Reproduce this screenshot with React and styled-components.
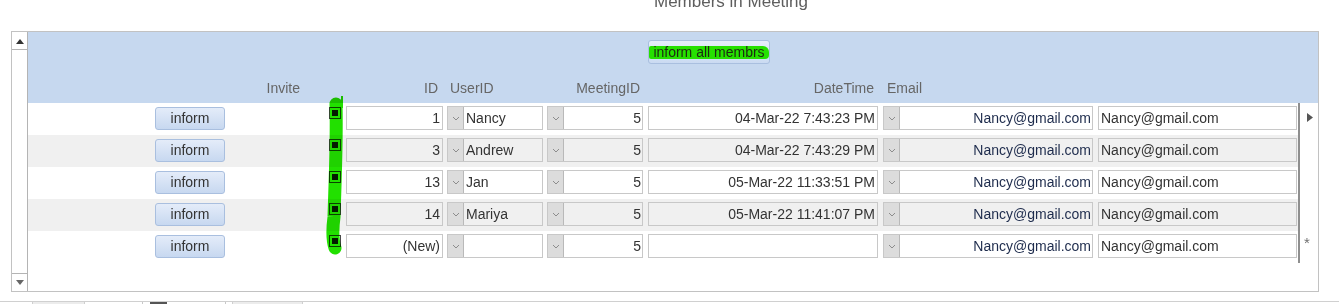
import styled, { createGlobalStyle } from "styled-components"

const GlobalStyle = createGlobalStyle`
    html, body {
        margin: 0;
        padding: 0;
        background: #ffffff;
    }

    body {
        font-family: "Liberation Sans", Arial, sans-serif;
    }
`

const COLS = "127px 70px 104px 17px 101px 100px 101px 235px 215px 200px"

const members = [
    { id: "1", user: "Nancy", meeting: "5", date: "04-Mar-22 7:43:23 PM" },
    { id: "3", user: "Andrew", meeting: "5", date: "04-Mar-22 7:43:29 PM" },
    { id: "13", user: "Jan", meeting: "5", date: "05-Mar-22 11:33:51 PM" },
    { id: "14", user: "Mariya", meeting: "5", date: "05-Mar-22 11:41:07 PM" },
    { id: "(New)", user: "", meeting: "5", date: "", isNew: true },
]

function Chevron() {
    return (
        <svg width="8" height="5" viewBox="0 0 8 5">
            <path d="M1 1 L4 4 L7 1" fill="none" stroke="#8c8c8c" strokeWidth="1" />
        </svg>
    )
}

function ComboBox({ width, align, navy, children }) {
    return (
        <Combo $width={width}>
            <ComboButton><Chevron /></ComboButton>
            <ComboText $align={align} $navy={navy}>{children}</ComboText>
        </Combo>
    )
}

export default function App() {
    return (
        <Page>
            <GlobalStyle />
            <Title>
                <span>Members in Meeting</span>
            </Title>

            <Panel>
                <ScrollBar>
                    <ScrollButton $down={false}>
                        <svg width="8" height="5" viewBox="0 0 8 5"><path d="M0 5 L4 0 L8 5 Z" fill="#333" /></svg>
                    </ScrollButton>
                    <ScrollButton $down>
                        <svg width="8" height="5" viewBox="0 0 8 5"><path d="M0 0 L4 5 L8 0 Z" fill="#666" /></svg>
                    </ScrollButton>
                </ScrollBar>

                <Sheet>
                    <Header>
                        <AllButton>
                            <Marked>inform all membrs</Marked>
                        </AllButton>

                        <Label $col="1 / 4" $align="right" $pad="0 29px 0 0">Invite</Label>
                        <Label $col="5" $align="right" $pad="0 9px 0 0">ID</Label>
                        <Label $col="6" $align="left" $pad="0 0 0 3px">UserID</Label>
                        <Label $col="7" $align="right" $pad="0 8px 0 0">MeetingID</Label>
                        <Label $col="8" $align="right" $pad="0 9px 0 0">DateTime</Label>
                        <Label $col="9" $align="left" $pad="0 0 0 4px">Email</Label>
                    </Header>

                    <Body>
                        <Records>
                            {members.map((m, i) => (
                                <Row key={i} $striped={i % 2 === 1}>
                                    <InformButton>inform</InformButton>
                                    <Check><span /></Check>
                                    <Field $width={97} $align="right">{m.id}</Field>
                                    <ComboBox width={96} align="left">{m.user}</ComboBox>
                                    <ComboBox width={96} align="right">{m.meeting}</ComboBox>
                                    <Field $width={230} $align="right">{m.date}</Field>
                                    <ComboBox width={210} align="right" navy>Nancy@gmail.com</ComboBox>
                                    <Field $width={199} $align="left">Nancy@gmail.com</Field>
                                </Row>
                            ))}
                        </Records>

                        <Divider />

                        <Selectors>
                            {members.map((m, i) => (
                                <Selector key={i}>
                                    {i === 0 && (
                                        <svg width="6" height="9" viewBox="0 0 6 9"><path d="M0 0 L6 4.5 L0 9 Z" fill="#555" /></svg>
                                    )}
                                    {m.isNew && <Star>*</Star>}
                                </Selector>
                            ))}
                        </Selectors>
                    </Body>
                </Sheet>

                <Marker width="1306" height="259" viewBox="0 0 1306 259">
                    <path d="M330 64 L330 76" stroke="#22e000" strokeWidth="2" fill="none" />
                    <path
                        d="M324 72 C 325 110, 323 150, 322 185 C 320 200, 321 210, 323 216"
                        stroke="#22e000"
                        strokeWidth="13"
                        strokeLinecap="round"
                        fill="none"
                    />
                </Marker>
            </Panel>

            <Footer>
                <FooterTab $width={51} $left={32} />
                <FooterDivider $left={57} />
                <FooterIcon />
                <FooterDivider $left={58} />
                <FooterTab $width={69} $left={6} />
            </Footer>
        </Page>
    )
}


const Page = styled.div`
    width: 1339px;
    height: 304px;
    overflow: hidden;
`

const Title = styled.div`
    height: 31px;
    overflow: hidden;
    padding-left: 654px;
    box-sizing: border-box;

    span {
        display: block;
        margin-top: -7px;
        font-size: 17px;
        line-height: 17px;
        color: #5e5e5e;
    }
`

const Panel = styled.div`
    position: relative;
    width: 1308px;
    height: 261px;
    margin-left: 11px;
    box-sizing: border-box;

    display: flex;

    border: 1px solid #c2c2c2;
`

const ScrollBar = styled.div`
    width: 16px;
    box-sizing: border-box;

    display: flex;
    flex-direction: column;
    justify-content: space-between;

    background: #ffffff;
    border-right: 1px solid #b4b4b4;
`

const ScrollButton = styled.div`
    height: 16px;
    margin-top: ${p => p.$down ? "0" : "1px"};
    margin-bottom: ${p => p.$down ? "1px" : "0"};

    display: flex;
    align-items: center;
    justify-content: center;

    border-top: ${p => p.$down ? "1px solid #b4b4b4" : "none"};
    border-bottom: ${p => p.$down ? "none" : "1px solid #b4b4b4"};
`

const Sheet = styled.div`
    flex: 1;

    display: flex;
    flex-direction: column;
`

const Header = styled.div`
    height: 71px;
    box-sizing: border-box;
    padding-top: 8px;

    display: grid;
    grid-template-columns: ${COLS};
    grid-template-rows: 24px 16px;
    row-gap: 16px;

    background: #c6d8ef;
`

const AllButton = styled.div`
    grid-column: 8;
    grid-row: 1;
    width: 122px;
    height: 24px;
    box-sizing: border-box;

    display: flex;
    align-items: center;

    font-size: 14px;
    color: #1c2a10;

    background: linear-gradient(#e6eefa, #cadaf1);
    border: 1px solid #a9bfdf;
    border-radius: 3px;
`

const Marked = styled.span`
    flex: 1;
    height: 13px;
    margin-top: 1px;

    line-height: 13px;
    text-align: center;

    background: #26e000;
    border-radius: 2px 6px 4px 2px;
`

const Label = styled.div`
    grid-column: ${p => p.$col};
    grid-row: 2;
    padding: ${p => p.$pad};

    font-size: 14px;
    line-height: 16px;
    text-align: ${p => p.$align};
    color: #666666;
`

const Body = styled.div`
    display: flex;
`

const Records = styled.div`
    width: 1270px;

    display: flex;
    flex-direction: column;
`

const Row = styled.div`
    height: 32px;
    box-sizing: border-box;
    padding-top: 3px;

    display: grid;
    grid-template-columns: ${COLS};
    align-items: start;

    background: ${p => p.$striped ? "#f0f0f0" : "#ffffff"};
`

const InformButton = styled.div`
    grid-column: 2;
    width: 70px;
    height: 23px;
    margin-top: 1px;
    box-sizing: border-box;

    font-size: 14px;
    line-height: 21px;
    text-align: center;
    color: #333333;

    background: linear-gradient(#e4ecf9, #c7d8f0);
    border: 1px solid #a9bfdf;
    border-radius: 3px;
`

const Check = styled.div`
    grid-column: 4;
    width: 12px;
    height: 12px;
    margin-top: 1px;
    box-sizing: border-box;

    display: flex;
    align-items: center;
    justify-content: center;

    border: 1px solid #4a4a4a;

    span {
        width: 6px;
        height: 6px;
        background: #1e1e1e;
    }
`

const Field = styled.div`
    width: ${p => p.$width}px;
    height: 24px;
    box-sizing: border-box;
    padding: 0 2px;

    font-size: 14px;
    line-height: 22px;
    text-align: ${p => p.$align};
    color: #333333;
    white-space: nowrap;
    overflow: hidden;

    border: 1px solid #c8c8c8;
`

const Combo = styled.div`
    width: ${p => p.$width}px;
    height: 24px;
    box-sizing: border-box;

    display: flex;

    border: 1px solid #c8c8c8;
`

const ComboButton = styled.div`
    width: 16px;
    box-sizing: border-box;

    display: flex;
    align-items: center;
    justify-content: center;

    background: #dcdcdc;
    border-right: 1px solid #b9b9b9;
`

const ComboText = styled.div`
    flex: 1;
    padding: 0 1px 0 2px;

    font-size: 14px;
    line-height: 22px;
    text-align: ${p => p.$align};
    color: ${p => p.$navy ? "#1d2b4c" : "#333333"};
    white-space: nowrap;
    overflow: hidden;
`

const Divider = styled.div`
    width: 2px;
    background: #8f8f8f;
`

const Selectors = styled.div`
    width: 18px;

    display: flex;
    flex-direction: column;
`

const Selector = styled.div`
    height: 32px;
    box-sizing: border-box;
    padding: 5px 0 0 7px;
`

const Star = styled.span`
    display: block;
    margin-left: -3px;

    font-size: 15px;
    line-height: 14px;
    color: #707070;
`

const Marker = styled.svg`
    position: absolute;
    left: 0;
    top: 0;

    pointer-events: none;
    mix-blend-mode: multiply;
`

const Footer = styled.div`
    height: 3px;
    margin-top: 9px;

    display: flex;

    border-top: 1px solid #d0d0d0;
`

const FooterTab = styled.div`
    width: ${p => p.$width}px;
    margin-left: ${p => p.$left}px;

    background: #ececec;
    border-left: 1px solid #cfcfcf;
    border-right: 1px solid #cfcfcf;
`

const FooterDivider = styled.div`
    width: 1px;
    margin-left: ${p => p.$left}px;
    background: #c8c8c8;
`

const FooterIcon = styled.div`
    width: 17px;
    margin-left: 7px;
    background: #555555;
`
